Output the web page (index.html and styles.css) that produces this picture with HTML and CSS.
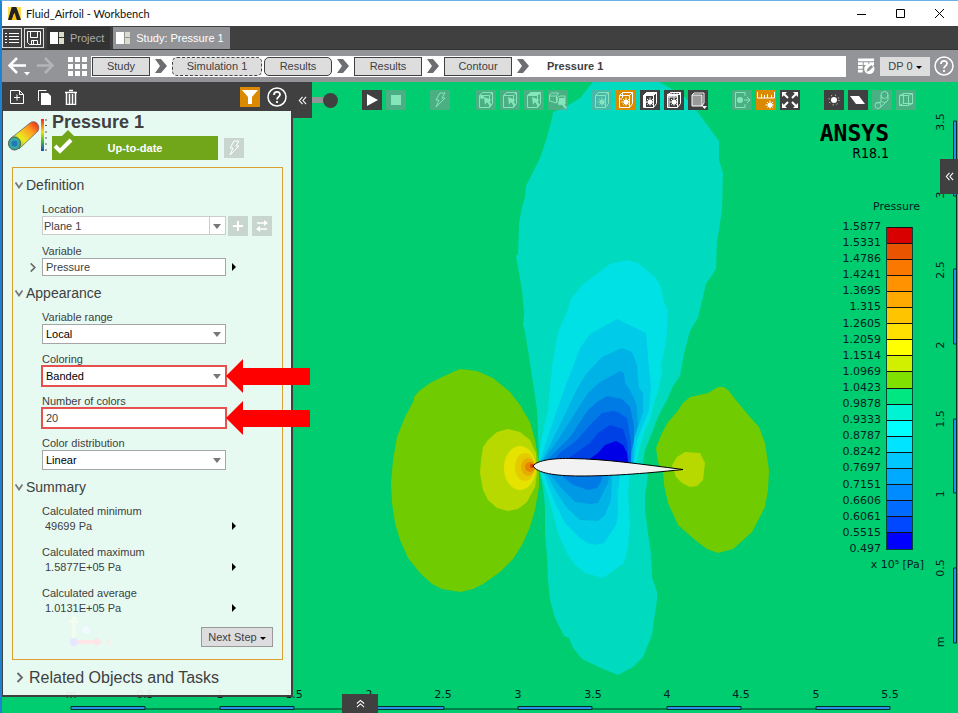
FILE: index.html
```html
<!DOCTYPE html>
<html lang="en">
<head>
    <meta charset="UTF-8">
    <meta name="viewport" content="width=device-width, initial-scale=1.0">
    <title>Fluid_Airfoil - Workbench</title>
    <link rel="stylesheet" href="styles.css">
</head>
<body>

    <!-- shared icon shapes -->
    <svg class="sprite" aria-hidden="true">
        <symbol id="i-bolt" viewBox="0 0 20 20"><path d="M10 3h5l-3 5h3L6 17l3-7H6z" fill="none" stroke="currentColor"/></symbol>
        <symbol id="i-cube" viewBox="0 0 20 20"><path d="M3.500 5.500h10v12h-10zM3.500 5.500l3-3h10l-3 3M16.500 2.500v11l-3 4" fill="none" stroke="currentColor"/></symbol>
        <symbol id="i-cursor" viewBox="0 0 20 20"><path d="M8 7l8 3-3 1 3 4-2 1-3-4-2 3z" fill="currentColor"/></symbol>
        <symbol id="i-gear" viewBox="0 0 20 20"><path d="M10 7.500v9M5.500 12h9M7 9l6 6M13 9l-6 6" stroke="currentColor" stroke-dasharray="2 1"/><circle cx="10" cy="12" r="2.500" fill="currentColor"/></symbol>
        <symbol id="i-chevron" viewBox="0 0 12 14"><path d="M0 0h6l6 7-6 7H0l5-7z" fill="#6d6e71"/></symbol>
        <symbol id="i-left" viewBox="0 0 10 10"><path d="M5 1L1.500 5 5 9M9 1L5.500 5 9 9" fill="none" stroke="#fff" stroke-width="1.200"/></symbol>
        <symbol id="i-layout" viewBox="0 0 14 14"><path d="M0 1h8v12H0z" fill="#fff"/><path d="M9 1h5v5H9zM9 7h5v6H9z" fill="#dcdccb"/></symbol>
        <symbol id="i-help" viewBox="0 0 20 20"><circle cx="10" cy="10" r="9" fill="none" stroke="#fff" stroke-width="1.500"/><path d="M7 8c0-4 6-4 6-.5 0 2.500-3 2.200-3 5M10 14v2" fill="none" stroke="#fff" stroke-width="1.800"/></symbol>
        <symbol id="i-down" viewBox="0 0 8 8"><path d="M0.500 1.500L4 6.500l3.500-5" fill="none" stroke="#777" stroke-width="1.800"/></symbol>
        <symbol id="i-right" viewBox="0 0 8 10"><path d="M1.500 0.500L6 5 1.500 9.500" fill="none" stroke="#666" stroke-width="1.800"/></symbol>
    </svg>

    <header class="title-bar">
        <svg class="app-logo" viewBox="0 0 14 14"><path d="M0 0h14v14H0z" fill="#ffdd4a"/><path d="M4 0h5l5 14H9L6.500 7 4 14H0z" fill="#222"/><path d="M7 6l2.500 8h-5z" fill="#ffc400"/></svg>
        <span class="app-title">Fluid_Airfoil - Workbench</span>
        <div class="window-buttons">
            <button aria-label="Minimize"><svg viewBox="0 0 10 10"><path d="M1 5.500h9" stroke="#000"/></svg></button>
            <button aria-label="Maximize"><svg viewBox="0 0 10 10"><path d="M1.500 0.500h8v8h-8z" fill="none" stroke="#000"/></svg></button>
            <button aria-label="Close"><svg viewBox="0 0 10 10"><path d="M1 0l9 9M10 0L1 9" stroke="#000"/></svg></button>
        </div>
    </header>

    <nav class="tab-bar">
        <button class="square-button" aria-label="Menu"><svg viewBox="0 0 16 16"><path d="M5 3.500h10M5 6.500h10M5 9.500h10M5 12.500h10M1 3.500h2M1 6.500h2M1 9.500h2M1 12.500h2" stroke="#fff"/></svg></button>
        <button class="square-button" aria-label="Save"><svg viewBox="0 0 16 16"><path d="M1.500 1.500h13v13h-11l-2-2zM4.500 1.500v6h7v-6M5.500 14.500v-4h6v4M7.500 11v3" fill="none" stroke="#fff"/></svg></button>
        <button class="tab"><svg><use href="#i-layout"/></svg>Project</button>
        <button class="tab active"><svg><use href="#i-layout"/></svg>Study: Pressure 1</button>
    </nav>

    <nav class="path-bar">
        <button class="nav-button" aria-label="Back"><svg viewBox="0 0 22 20"><path d="M18 9.500H2M9 2L1.500 9.500 9 17" fill="none" stroke="#fff" stroke-width="2.500"/><path d="M16 16h6l-3 3.500z" fill="#fff"/></svg></button>
        <button class="nav-button faded" aria-label="Forward"><svg viewBox="0 0 22 20"><path d="M1 9.500h15M9 2l7.500 7.500L9 17" fill="none" stroke="#fff" stroke-width="2.500"/></svg></button>
        <button class="grid-button" aria-label="Overview"><svg viewBox="0 0 19 19"><path d="M0 0h5v5H0zM7 0h5v5H7zM14 0h5v5h-5zM0 7h5v5H0zM7 7h5v5H7zM14 7h5v5h-5zM0 14h5v5H0zM7 14h5v5H7zM14 14h5v5h-5z" fill="#fff"/></svg></button>
        <div class="crumbs">
            <button class="crumb short">Study</button>
            <svg class="arrow"><use href="#i-chevron"/></svg>
            <button class="crumb long dashed">Simulation 1</button>
            <button class="crumb rounded">Results</button>
            <svg class="arrow"><use href="#i-chevron"/></svg>
            <button class="crumb">Results</button>
            <svg class="arrow"><use href="#i-chevron"/></svg>
            <button class="crumb">Contour</button>
            <svg class="arrow"><use href="#i-chevron"/></svg>
            <strong>Pressure 1</strong>
        </div>
        <button class="table-button" aria-label="Parameters"><svg viewBox="0 0 18 18"><path d="M0 1h17v3H0zM0 5h5v3H0zM6 5h5v3H6zM12 5h5v3h-5zM0 9h5v3H0zM0 13h5v3H0z" fill="#fff"/><circle cx="12" cy="12" r="5.500" fill="#fff"/><path d="M9 15l1-3 4-4 2 2-4 4z" fill="#939498"/></svg></button>
        <button class="dp-button">DP 0 <span class="caret"></span></button>
        <button class="help-button" aria-label="Help"><svg><use href="#i-help"/></svg></button>
    </nav>

    <main class="workspace">
        <!-- pressure contour, airfoil and rulers -->
        <svg class="contour" viewBox="2 82 956 631" preserveAspectRatio="xMidYMid slice">
            <rect x="-2000" y="-2000" width="6000" height="6000" fill="#00cc70"/>
            <path fill="#00dabe" d="M552 118L553 112 564 108 580 98 588 88 593 82 660 82 685 97 697 111 719 141 719 160 723 173 722 210 719 230 717 242 716 269 706 284 703 297 698 318 690 331 684 354 680 376 673 386 668 398 658 417 652 433 645 450 643 462 648 475 645 497 645 510 648 533 651 553 652 577 657 592 657 600 654 620 652 635 643 657 633 667 618 675 603 669 582 659 573 648 569 638 564 636 555 618 550 600 548 580 547 557 545 533 545 507 543 487 539 467 538 433 537 410 532 377 528 350 525 332 523 325 524 313 522 290 516 256 518 254 519 223 522 207 525 197 526 186 540 158 547 137z"/>
            <path fill="#00e1e6" d="M627 260L610 264 582 285 571 299 567 312 558 332 553 360 550 387 548 410 541 440 538 467 542 477 550 503 558 533 567 553 575 565 585 573 603 578 624 563 628 547 630 523 628 493 630 473 636 465 640 447 645 430 650 420 655 400 659 387 662 372 661 365 664 353 667 332 668 310 664 303 661 287 655 277 638 263z"/>
            <path fill="#00cbe8" d="M617 319L590 334 580 348 573 367 567 382 557 410 545 445 539 465 545 477 555 503 565 523 580 538 587 543 595 545 604 543 616 525 618 515 618 493 620 473 634 463 637 440 641 430 647 415 649 410 651 387 648 357 646 333z"/>
            <path fill="#00b3e6" d="M622 348L602 357 587 373 578 387 567 410 550 445 540 464 548 477 557 493 567 508 580 520 598 521 605 515 611 500 612 475 633 463 634 440 643 412 643 393 639 388 637 365 632 352z"/>
            <path fill="#0099e6" d="M620 371L600 382 588 393 577 410 558 440 542 462 552 477 563 490 575 502 590 504 598 503 603 493 608 483 610 475 631 462 633 440 638 425 637 410 636 403 630 390 625 383 624 373z"/>
            <path fill="#007be6" d="M607 396L597 402 588 410 570 437 546 461 562 476 573 485 588 490 597 488 601 482 603 475 629 461 634 440 634 425 630 407 622 399z"/>
            <path fill="#005de6" d="M613 411L602 413 590 425 577 440 560 453 552 462 631 463 631 443 629 430 627 418 618 412z"/>
            <path fill="#0041e6" d="M610 425L598 433 590 443 573 455 562 462 629 463 627 442 623 429z"/>
            <path fill="#0000e6" d="M616 441L605 445 598 453 588 460 628 464 627 453 623 445z"/>

            <path fill="#70cb00" d="M460 369L453 372 440 378 430 383 419 391 414 397 414 400 405 417 397 437 393 460 391 483 392 503 395 523 400 540 408 558 420 573 432 584 442 589 460 592 473 589 483 584 500 572 513 559 522 545 530 527 535 510 539 487 539 463 535 440 530 422 520 405 510 392 493 378 477 371z"/>
            <path fill="#b8d900" d="M508 429L497 432 488 440 483 447 481 460 480 473 483 490 488 500 497 508 508 511 518 509 527 502 535 487 537 473 536 453 530 440 520 432z"/>
            <ellipse cx="520" cy="468" rx="16" ry="22" fill="#e6e300"/>
            <ellipse cx="525" cy="467" rx="10" ry="14" fill="#e6ca00"/>
            <ellipse cx="528" cy="467" rx="7" ry="9" fill="#e6ad00"/>
            <circle cx="530" cy="467" r="5" fill="#e68600"/>
            <circle cx="532" cy="466" r="2" fill="#d63c00"/>
            <path fill="#70cb00" d="M718 387L708 393 690 397 683 403 677 412 668 422 662 433 656 448 658 462 663 472 664 485 668 503 678 525 695 540 707 549 718 553 733 549 752 532 765 507 768 490 769 470 765 443 759 427 750 417 740 405 735 399 729 391 724 387z"/>
            <path fill="#b8d900" d="M685 452L700 453 705 463 703 480 697 486 690 487 682 483 676 477 672 465 677 457z"/>
            <path fill="#f2f2f2" stroke="#000" d="M533 466C537 460 555 458 572 458.500 605 459 640 464 683 469.500 640 474 610 476 580 476 555 476 537 473 533 466z"/>

            <!-- triad -->
            <g stroke-width="4">
                <path d="M74 642h22" stroke="#f00"/><path d="M95 637l8 5-8 5z" fill="#f00"/>
                <path d="M74 642v-20" stroke="#6d6"/><path d="M69 623l5-8 5 8z" fill="#8e6"/>
            </g>
            <circle cx="74" cy="642" r="4" fill="#00f"/>
            <circle cx="86" cy="630" r="4" fill="#6cf"/>
            <text x="109" y="646" class="triad-label">X</text>

            <g class="ruler">
                <path d="M71 709H890"/>
                <path d="M71 706.500h74v3h-74zM220 706.500h74v3h-74zM369 706.500h75v3h-75zM518 706.500h74v3h-74zM667 706.500h74v3h-74zM816 706.500h74v3h-74z"/>
                <path d="M956.500 121V643"/>
                <path d="M953.500 121h3v75h-3zM953.500 269h3v75h-3zM953.500 419h3v74h-3zM953.500 568h3v75h-3z"/>
            </g>
            <g class="ruler-text">
                <text x="71" y="698">m</text><text x="145" y="698">0.5</text><text x="220" y="698">1</text><text x="294" y="698">1.5</text>
                <text x="369" y="698">2</text><text x="443" y="698">2.5</text><text x="518" y="698">3</text><text x="593" y="698">3.5</text>
                <text x="667" y="698">4</text><text x="741" y="698">4.5</text><text x="816" y="698">5</text><text x="890" y="698">5.5</text>
            </g>
            <g class="ruler-text" transform="translate(944 0) rotate(-90)">
                <text x="-122" y="0">3.5</text><text x="-195" y="0">3</text><text x="-270" y="0">2.5</text><text x="-345" y="0">2</text>
                <text x="-419" y="0">1.5</text><text x="-494" y="0">1</text><text x="-568" y="0">0.5</text><text x="-642" y="0">m</text>
            </g>
        </svg>

        <aside class="sidebar">
            <div class="panel-tools">
                <button aria-label="New"><svg viewBox="0 0 16 16"><path d="M1.500 1.500h9l4 4v9h-13zM10.500 1.500v4h4M8 5.500v6M5 8.500h6" fill="none" stroke="#fff"/></svg></button>
                <button aria-label="Copy"><svg viewBox="0 0 16 16"><path d="M2.500 12V1.500h8" fill="none" stroke="#fff"/><path d="M5 4h7l3 3v9H5z" fill="#fff"/></svg></button>
                <button aria-label="Delete"><svg viewBox="0 0 16 16"><path d="M2 3.500h12M6 1.500h4M3.500 4v11.500h9V4M6.500 5v10M9.500 5v10" fill="none" stroke="#fff" stroke-width="1.500"/></svg></button>
                <button class="filter" aria-label="Filter"><svg viewBox="0 0 20 20"><path d="M2 3h16l-6 7v7H8v-7z" fill="#fff"/></svg></button>
                <button class="panel-help" aria-label="Panel help"><svg><use href="#i-help"/></svg></button>
            </div>

            <div class="panel">
                <div class="panel-head">
                    <svg class="object-icon" viewBox="0 0 40 34">
                        <defs><linearGradient id="rainbow" x1="0" y1="1" x2="1" y2="0"><stop offset="0" stop-color="#38a838"/><stop offset=".4" stop-color="#e8ec20"/><stop offset=".7" stop-color="#ff9a20"/><stop offset="1" stop-color="#e81818"/></linearGradient>
                        <linearGradient id="scale" x1="0" y1="0" x2="0" y2="1"><stop offset="0" stop-color="#f22"/><stop offset=".4" stop-color="#fd0"/><stop offset=".7" stop-color="#4b3"/><stop offset="1" stop-color="#24c"/></linearGradient></defs>
                        <path d="M2 21L22 5c5-4 11 2 8 8L11 31z" fill="url(#rainbow)" stroke="#666" stroke-width=".800"/>
                        <ellipse cx="6.500" cy="25.500" rx="6" ry="6.500" fill="#35aaa0" stroke="#555"/><circle cx="6.500" cy="25.500" r="3" fill="#2277bb"/>
                        <rect x="33" y="1" width="3" height="32" fill="url(#scale)"/><path d="M37 2h2M37 7.500h2M37 14h2M37 20h2M37 26h2M37 32h2" stroke="#555"/>
                    </svg>
                    <div class="panel-title">
                        <h1>Pressure 1</h1>
                        <div class="status-row">
                            <div class="status"><svg viewBox="0 0 20 16"><path d="M2 8l5 5L18 2" fill="none" stroke="#fff" stroke-width="4"/></svg>Up-to-date</div>
                            <button class="pale-button" aria-label="Update"><svg><use href="#i-bolt"/></svg></button>
                        </div>
                    </div>
                </div>

                <div class="frame">
                    <h2><svg><use href="#i-down"/></svg>Definition</h2>
                    <div class="fields">
                        <div class="field">
                            <label for="location">Location</label>
                            <div class="control-row">
                                <div class="select-box split"><select id="location"><option>Plane 1</option></select></div>
                                <button class="pale-button" aria-label="Add"><svg viewBox="0 0 20 20"><path d="M10 5v10M5 10h10" stroke="#fff" stroke-width="2"/></svg></button>
                                <button class="pale-button swap" aria-label="Swap"><svg viewBox="0 0 20 20"><path d="M5 7h9M6 13h9" stroke="#fff" stroke-width="1.500"/><path d="M12 4l4 3-4 3zM8 10l-4 3 4 3z" fill="#fff"/></svg></button>
                            </div>
                        </div>
                        <div class="field">
                            <label for="variable">Variable</label>
                            <div class="control-row">
                                <svg class="expander"><use href="#i-right"/></svg>
                                <input type="text" id="variable" value="Pressure">
                                <span class="more"></span>
                            </div>
                        </div>
                    </div>

                    <h2><svg><use href="#i-down"/></svg>Appearance</h2>
                    <div class="fields">
                        <div class="field">
                            <label for="range">Variable range</label>
                            <div class="select-box"><select id="range"><option>Local</option></select></div>
                        </div>
                        <div class="field">
                            <label for="coloring">Coloring</label>
                            <div class="select-box marked"><select id="coloring"><option>Banded</option></select>
                                <svg class="pointer" viewBox="0 0 84 34"><path d="M0 17L17 0v9h67v17H17v8z" fill="#f00"/></svg>
                            </div>
                        </div>
                        <div class="field">
                            <label for="colors">Number of colors</label>
                            <div class="select-box plain marked"><input type="text" id="colors" value="20">
                                <svg class="pointer" viewBox="0 0 84 34"><path d="M0 17L17 0v9h67v17H17v8z" fill="#f00"/></svg>
                            </div>
                        </div>
                        <div class="field">
                            <label for="distribution">Color distribution</label>
                            <div class="select-box"><select id="distribution"><option>Linear</option></select></div>
                        </div>
                    </div>

                    <h2><svg><use href="#i-down"/></svg>Summary</h2>
                    <dl class="summary">
                        <div><dt>Calculated minimum</dt><dd>49699 Pa<span class="more"></span></dd></div>
                        <div><dt>Calculated maximum</dt><dd>1.5877E+05 Pa<span class="more"></span></dd></div>
                        <div><dt>Calculated average</dt><dd>1.0131E+05 Pa<span class="more"></span></dd></div>
                    </dl>
                    <button class="next-step">Next Step <span class="caret"></span></button>
                </div>

                <h2 class="related"><svg><use href="#i-right"/></svg>Related Objects and Tasks</h2>
            </div>
        </aside>

        <section class="viewport">
            <div class="toolbar">
                <button class="collapse" aria-label="Collapse panel"><svg><use href="#i-left"/></svg></button>
                <input type="range" class="fade-slider" aria-label="Panel opacity" value="100">
                <div class="group">
                    <button aria-label="Play"><svg viewBox="0 0 20 20"><path d="M5 4l11 6-11 6z" fill="#fff"/></svg></button>
                    <button class="off" aria-label="Stop"><svg viewBox="0 0 20 20"><path d="M5 5h10v10H5z" fill="currentColor"/></svg></button>
                </div>
                <div class="group">
                    <button class="off" aria-label="Update"><svg><use href="#i-bolt"/></svg></button>
                </div>
                <div class="group">
                    <button class="off" aria-label="Select vertex"><svg viewBox="0 0 20 20"><use href="#i-cube"/><use href="#i-cursor"/><circle cx="6" cy="7" r="2" fill="currentColor"/></svg></button>
                    <button class="off" aria-label="Select edge"><svg viewBox="0 0 20 20"><use href="#i-cube"/><use href="#i-cursor"/></svg></button>
                    <button class="off" aria-label="Select face"><svg viewBox="0 0 20 20"><use href="#i-cube"/><path d="M3 6l4-4h10l-4 4z" fill="currentColor"/><use href="#i-cursor"/></svg></button>
                    <button class="off" aria-label="Select body"><svg viewBox="0 0 20 20"><path d="M1.500 5l2-2h7l-2 3h-7zM1.500 6v5l7 2V6M9 8l3-2h5v8l-6 1z" fill="none" stroke="currentColor"/><path d="M11 8h6v6h-6z" fill="currentColor"/><path d="M13 12l5 6" stroke="currentColor" stroke-width="2"/></svg></button>
                </div>
                <div class="group">
                    <button class="off" aria-label="Wireframe"><svg viewBox="0 0 20 20"><use href="#i-cube"/><use href="#i-gear"/></svg></button>
                    <button class="on" aria-label="Shaded"><svg viewBox="0 0 20 20"><use href="#i-cube"/><path d="M6.500 3v5M3 9h3" stroke="#fff"/><use href="#i-gear"/></svg></button>
                    <button aria-label="Shaded edges"><svg viewBox="0 0 20 20"><use href="#i-cube"/><path d="M3 6l4-4h10l-4 4zM3 6h3v11H3z" fill="#fff"/><use href="#i-gear"/></svg></button>
                    <button aria-label="Mesh"><svg viewBox="0 0 20 20"><use href="#i-cube"/><path d="M3 4.500h13M3 7h11M5 3v14M7 2v5M10 2v5M13 2v5" stroke="#fff"/><use href="#i-gear"/></svg></button>
                    <button aria-label="Views"><svg viewBox="0 0 20 20"><path d="M4 5h10v11H4z" fill="#999" stroke="#fff"/><path d="M4 5l2-2h10v10l-2 3" fill="none" stroke="#fff"/><path d="M14 16h5l-2.500 3z" fill="#fff"/></svg></button>
                </div>
                <div class="group">
                    <button class="off" aria-label="Export"><svg viewBox="0 0 20 20"><path d="M13 6V2.500H3.500v15H13V14M12 10h6M15 7l3 3-3 3" fill="none" stroke="currentColor"/><circle cx="8" cy="10" r="3" fill="currentColor"/></svg></button>
                    <button class="on" aria-label="Ruler"><svg viewBox="0 0 20 20"><path d="M1.500 2v6h17V2M5.500 4v4M8.500 5v3M11.500 4v4M15.500 5v3" fill="none" stroke="#fff"/><use href="#i-gear" x="4" y="3"/></svg></button>
                    <button aria-label="Fit"><svg viewBox="0 0 20 20"><path d="M3 3l5 5M17 3l-5 5M3 17l5-5M17 17l-5-5" stroke="#fff" stroke-width="2"/><path d="M2 2h5L2 7zM18 2v5l-5-5zM2 18v-5l5 5zM18 18h-5l5-5z" fill="#fff"/></svg></button>
                </div>
                <div class="group">
                    <button aria-label="Light"><svg viewBox="0 0 20 20"><circle cx="10" cy="10" r="3" fill="#fff"/><circle cx="10" cy="10" r="5" fill="none" stroke="#fff" stroke-dasharray="1 3"/></svg></button>
                    <button aria-label="Plane"><svg viewBox="0 0 20 20"><path d="M2 6h9l6 8H8z" fill="#fff"/></svg></button>
                    <button class="off" aria-label="Tubes"><svg viewBox="0 0 20 20"><path d="M9 5v7l-5 1M16 5v5l-7 7" fill="none" stroke="currentColor"/><circle cx="12.500" cy="5" r="3.500" fill="none" stroke="currentColor"/><circle cx="6" cy="15.500" r="3" fill="none" stroke="currentColor"/><path d="M9 11c2 2 5 2 7-1" fill="none" stroke="currentColor"/></svg></button>
                    <button class="off" aria-label="Bounding box"><svg viewBox="0 0 20 20"><path d="M3.500 5.500h9v10h-9zM7.500 3.500h9v10h-9zM3.500 5.500l4-2M12.500 5.500l4-2M3.500 15.500l4-2M12.500 15.500l4-2" fill="none" stroke="currentColor"/></svg></button>
                </div>
            </div>

            <div class="brand">
                <div class="brand-name">ANSYS</div>
                <div class="brand-version">R18.1</div>
            </div>

            <div class="legend">
                <div class="legend-title">Pressure</div>
                <div class="legend-body">
                    <ol class="legend-values">
                        <li>1.5877</li><li>1.5331</li><li>1.4786</li><li>1.4241</li><li>1.3695</li><li>1.315</li><li>1.2605</li>
                        <li>1.2059</li><li>1.1514</li><li>1.0969</li><li>1.0423</li><li>0.9878</li><li>0.9333</li><li>0.8787</li>
                        <li>0.8242</li><li>0.7697</li><li>0.7151</li><li>0.6606</li><li>0.6061</li><li>0.5515</li><li>0.497</li>
                    </ol>
                    <div class="legend-bar">
                        <i class="b1"></i><i class="b2"></i><i class="b3"></i><i class="b4"></i><i class="b5"></i>
                        <i class="b6"></i><i class="b7"></i><i class="b8"></i><i class="b9"></i><i class="b10"></i>
                        <i class="b11"></i><i class="b12"></i><i class="b13"></i><i class="b14"></i><i class="b15"></i>
                        <i class="b16"></i><i class="b17"></i><i class="b18"></i><i class="b19"></i><i class="b20"></i>
                    </div>
                </div>
                <div class="legend-unit">x 10⁵ [Pa]</div>
            </div>

            <button class="edge-tab right" aria-label="Open right panel"><svg><use href="#i-left"/></svg></button>
            <button class="edge-tab bottom" aria-label="Open bottom panel"><svg viewBox="0 0 10 10"><path d="M1 5l4-3.500L9 5M1 9l4-3.500L9 9" fill="none" stroke="#fff" stroke-width="1.200"/></svg></button>
        </section>
    </main>

</body>
</html>
```
FILE: styles.css
```css
* {
    box-sizing: border-box;
}

body {
    margin: 0;
    height: 100vh;
    display: flex;
    flex-direction: column;
    overflow: hidden;
    border-left: 2px solid #1e82d2;
    border-top: 1px solid #6cb2ea;
    font-family: "Liberation Sans", Arial, sans-serif;
    font-size: 11px;
    color: #404041;
}

button {
    margin: 0;
    padding: 0;
    border: none;
    background: none;
    font: inherit;
    color: inherit;
    cursor: pointer;
}

svg {
    display: block;
}

h1, h2, dl, dd, ol {
    margin: 0;
    padding: 0;
}

.sprite {
    position: absolute;
    width: 0;
    height: 0;
}

/* title bar */
.title-bar {
    height: 25px;
    display: flex;
    align-items: center;
    background: #fff;
    padding-left: 6px;
}

.app-logo {
    width: 13px;
    height: 13px;
}

.app-title {
    margin-left: 5px;
    font-family: Lato, sans-serif;
    font-size: 11px;
    line-height: 16px;
    color: #111;
}

.window-buttons {
    display: flex;
    margin-left: auto;
}

.window-buttons button {
    width: 39px;
    height: 24px;
    display: grid;
    place-items: center;
}

.window-buttons svg {
    width: 10px;
    height: 10px;
}

/* tabs */
.tab-bar {
    height: 24px;
    display: flex;
    align-items: center;
    background: #404041;
    border-bottom: 1px solid #333;
}

.square-button {
    width: 20px;
    height: 20px;
    margin-right: 2px;
    padding: 1px;
    border: 1px solid #ddd;
}

.tab {
    height: 22px;
    display: flex;
    align-items: center;
    gap: 6px;
    margin: 0 2px 0 1px;
    padding: 0 6px 0 3px;
    background: #333;
    color: #aaa;
}

.tab svg {
    width: 14px;
    height: 14px;
}

.tab.active {
    background: #939498;
    color: #fff;
}

/* breadcrumb */
.path-bar {
    height: 32px;
    display: flex;
    align-items: center;
    background: #939498;
    padding: 0 4px 0 6px;
}

.nav-button {
    width: 28px;
}

.nav-button svg {
    width: 22px;
    height: 20px;
}

.faded {
    opacity: .3;
}

.grid-button {
    margin: 0 4px 0 4px;
}

.grid-button svg {
    width: 19px;
    height: 19px;
}

.crumbs {
    flex: 1;
    height: 21px;
    display: flex;
    align-items: center;
    gap: 2px;
    padding-left: 1px;
    background: #fff;
}

.crumb {
    width: 68px;
    height: 19px;
    border: 1px solid #404041;
    background: #ddd;
}

.crumb.short {
    width: 58px;
}

.crumb.long {
    width: 90px;
}

.crumb.rounded, .crumb.dashed {
    border-radius: 5px;
}

.crumb.dashed {
    border-style: dashed;
}

.arrow {
    width: 12px;
    height: 14px;
    margin: 0 3px;
}

.crumbs strong {
    margin-left: 13px;
}

.table-button {
    margin: 0 5px 0 12px;
}

.table-button svg {
    width: 17px;
    height: 18px;
}

.dp-button {
    width: 50px;
    height: 19px;
    background: #ddd;
}

.caret {
    display: inline-block;
    border: 3px solid transparent;
    border-top-color: #000;
    border-bottom: none;
    vertical-align: middle;
}

.help-button {
    margin-left: 4px;
}

.help-button svg, .panel-help svg {
    width: 20px;
    height: 20px;
}

/* workspace */
.workspace {
    flex: 1;
    position: relative;
    display: flex;
    align-items: flex-start;
    min-height: 0;
}

.contour {
    position: absolute;
    inset: 0;
    width: 100%;
    height: 100%;
}

.ruler path {
    fill: #2a90e8;
    stroke: #032;
}

.ruler-text {
    font: 11px "DejaVu Sans", sans-serif;
    text-anchor: middle;
    fill: #022;
}

.triad-label {
    font-size: 9px;
    fill: #f00;
    text-anchor: middle;
}

/* sidebar */
.sidebar {
    position: relative;
    z-index: 1;
    width: 291px;
}

.panel-tools {
    height: 29px;
    display: flex;
    align-items: center;
    gap: 11px;
    padding: 0 6px 0 7px;
    background: #404041;
}

.panel-tools svg {
    width: 16px;
    height: 16px;
}

.panel-tools .filter {
    margin-left: auto;
    margin-right: -4px;
    background: #db8900;
}

.panel-tools .filter svg, .panel-tools .panel-help svg {
    width: 20px;
    height: 20px;
}

.panel {
    background: rgba(255, 255, 255, .9);
    border: 2px solid #404041;
    border-top: none;
    border-left-width: 1px;
    padding: 0 8px 0 5px;
}

.panel-head {
    display: flex;
    height: 56px;
}

.object-icon {
    width: 40px;
    height: 34px;
    margin-top: 7px;
}

.panel-title {
    margin-left: 4px;
}

.panel-title h1 {
    font-size: 18px;
    line-height: 22px;
    margin-bottom: 3px;
}

.status-row {
    display: flex;
    align-items: center;
    gap: 6px;
}

.status {
    position: relative;
    width: 166px;
    height: 24px;
    line-height: 24px;
    text-align: center;
    font-weight: bold;
    color: #fff;
    background: #71a61a;
}

.status::before {
    content: "";
    position: absolute;
    left: 10px;
    bottom: 100%;
    border: 6px solid transparent;
    border-top: none;
    border-bottom-color: #71a61a;
}

.status svg {
    position: absolute;
    left: 1px;
    top: 2px;
    width: 20px;
    height: 16px;
}

.pale-button {
    width: 20px;
    height: 20px;
    background: #c8d6cf;
    color: #fff;
}

.pale-button svg {
    width: 20px;
    height: 20px;
}

.frame {
    margin-left: 4px;
    padding: 7px 9px 12px 2px;
    border: 1px solid #dba030;
}

h2 {
    display: flex;
    align-items: center;
    gap: 3px;
    font-size: 14px;
    line-height: 20px;
    font-weight: normal;
}

h2 svg {
    width: 8px;
    height: 8px;
}

.fields {
    display: grid;
    gap: 8px;
    margin: 7px 0 7px 27px;
}

.field label {
    display: block;
    line-height: 14px;
}

.control-row {
    position: relative;
    display: flex;
    align-items: center;
    gap: 2px;
}

.select-box {
    position: relative;
    width: 184px;
    height: 20px;
}

.select-box select, .field input {
    display: block;
    width: 184px;
    height: 20px;
    padding: 0 3px;
    border: 1px solid #a5a5a5;
    border-radius: 0;
    background: #fff;
    appearance: none;
    font: inherit;
    color: #000;
}

.field input {
    height: 18px;
    color: #404041;
}

.select-box::after {
    content: "";
    position: absolute;
    right: 5px;
    top: 8px;
    border: 4px solid transparent;
    border-top: 5px solid #777;
    border-bottom: none;
}

.select-box.plain::after {
    display: none;
}

.split select {
    height: 19px;
    padding: 0 1px;
    border-color: #ccc;
    color: #404041;
}

.split::before {
    content: "";
    position: absolute;
    right: 16px;
    height: 19px;
    border-left: 1px solid #ccc;
}

.swap {
    margin-left: 2px;
}

.marked select, .marked input {
    outline: 2px solid #e85050;
    outline-offset: -1px;
}

.marked input {
    height: 20px;
}

.pointer {
    position: absolute;
    left: 100%;
    top: -7px;
    width: 84px;
    height: 34px;
}

.expander {
    position: absolute;
    left: -13px;
    width: 8px;
    height: 9px;
}

.more {
    border: 4px solid transparent;
    border-left: 4px solid #000;
    border-right: none;
    margin-left: 4px;
}

.summary {
    display: grid;
    gap: 11px;
    margin: 7px 0 11px 27px;
}

.summary dt {
    line-height: 14px;
}

.summary dd {
    display: flex;
    align-items: center;
    justify-content: space-between;
    width: 194px;
    padding-left: 3px;
    line-height: 16px;
}

.next-step {
    display: block;
    width: 72px;
    height: 20px;
    margin-left: auto;
    border: 1px solid #999;
    background: #dddde0;
}

.related {
    gap: 5px;
    padding-left: 8px;
    font-size: 16px;
    line-height: 35px;
}

.related svg {
    height: 11px;
}

/* viewport */
.viewport {
    flex: 1;
    align-self: stretch;
    position: relative;
    display: flex;
    flex-direction: column;
    align-items: flex-end;
}

.toolbar {
    align-self: stretch;
    height: 36px;
    display: flex;
    align-items: center;
    gap: 24px;
}

.collapse {
    width: 20px;
    height: 36px;
    margin-left: -1px;
    display: grid;
    place-items: center;
    background: #404041;
}

.collapse svg {
    width: 9px;
    height: 9px;
}

.fade-slider {
    width: 26px;
    height: 16px;
    margin: 0 0 0 -24px;
    appearance: none;
    background: linear-gradient(#939498, #939498) center / 100% 6px no-repeat;
}

.fade-slider::-webkit-slider-thumb {
    appearance: none;
    width: 15px;
    height: 15px;
    border-radius: 50%;
    background: #404041;
}

.group {
    display: flex;
    gap: 4px;
}

.group button {
    width: 20px;
    height: 20px;
    background: #404041;
    color: #fff;
}

.group svg {
    width: 20px;
    height: 20px;
}

.group .off {
    background: rgba(147, 148, 152, .5);
    color: #85e5bb;
}

.group .off:only-child {
    margin-right: 2px;
}

.group .on {
    background: #db8900;
}

.brand {
    margin-right: 69px;
    text-align: right;
    color: #000;
}

.brand-name {
    font: bold 23px/30px "DejaVu Sans Mono", monospace;
}

.brand-version {
    font: 14px/10px "DejaVu Sans Condensed", "DejaVu Sans", sans-serif;
}

.legend {
    margin: 41px 34px 0 0;
    font: 11px/16px "DejaVu Sans", sans-serif;
    text-align: right;
    color: #022;
}

.legend-title {
    padding-right: 4px;
    margin-bottom: 4px;
}

.legend-body {
    display: flex;
    align-items: center;
    justify-content: flex-end;
    gap: 5px;
    margin-right: 11px;
}

.legend-values {
    height: 338px;
    display: flex;
    flex-direction: column;
    justify-content: space-between;
    list-style: none;
}

.legend-bar {
    width: 27px;
    height: 323px;
    display: grid;
    grid-auto-rows: 1fr;
    border: 1px solid #043;
    border-top: none;
}

.legend-bar i {
    border-top: 1px solid #111;
}

.b1 { background: #d80000; }
.b2 { background: #e85400; }
.b3 { background: #fa7800; }
.b4 { background: #ff9200; }
.b5 { background: #ffaa00; }
.b6 { background: #ffc400; }
.b7 { background: #ffe000; }
.b8 { background: #ffff00; }
.b9 { background: #d0f000; }
.b10 { background: #80e000; }
.b11 { background: #00e680; }
.b12 { background: #00f4d4; }
.b13 { background: #00ffff; }
.b14 { background: #00e4ff; }
.b15 { background: #00c8ff; }
.b16 { background: #00aaff; }
.b17 { background: #008cff; }
.b18 { background: #006cff; }
.b19 { background: #0048ff; }
.b20 { background: #0000ff; }

.edge-tab {
    position: absolute;
    display: grid;
    place-items: center;
    background: #404041;
}

.edge-tab svg {
    width: 9px;
    height: 9px;
}

.edge-tab.right {
    right: 0;
    top: 77px;
    width: 18px;
    height: 35px;
}

.edge-tab.bottom {
    left: 49px;
    bottom: 0;
    width: 36px;
    height: 19px;
}
```
